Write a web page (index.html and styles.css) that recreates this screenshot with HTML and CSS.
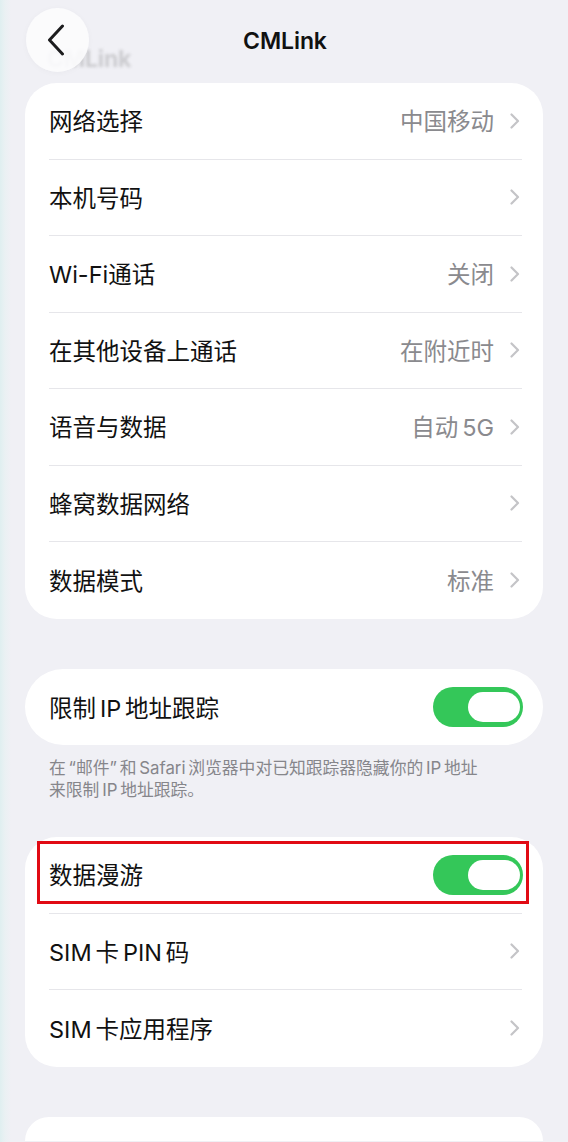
FILE: index.html
```html
<!DOCTYPE html>
<html lang="zh-CN">
<head>
<meta charset="utf-8">
<title>CMLink</title>
<link rel="stylesheet" href="styles.css">
</head>
<body>
<div class="page">
  <header class="nav">
    <span class="ghost-title">CMLink</span>
    <button class="back" aria-label="返回">
      <svg width="18" height="32" viewBox="0 0 18 32"><path d="M15.5 2 L2.5 16 L15.5 30" fill="none" stroke="#1c1c1e" stroke-width="3" stroke-linecap="round" stroke-linejoin="round"/></svg>
    </button>
    <h1 class="title">CMLink</h1>
    <span class="nav-spacer"></span>
  </header>

  <section class="card">
    <div class="row"><span class="label">网络选择</span><span class="value">中国移动</span><svg class="chev" width="10" height="16" viewBox="0 0 10 16"><path d="M1.5 1.5 L8 8 L1.5 14.5"/></svg></div>
    <div class="row"><span class="label">本机号码</span><span class="value"></span><svg class="chev" width="10" height="16" viewBox="0 0 10 16"><path d="M1.5 1.5 L8 8 L1.5 14.5"/></svg></div>
    <div class="row"><span class="label">Wi-Fi通话</span><span class="value">关闭</span><svg class="chev" width="10" height="16" viewBox="0 0 10 16"><path d="M1.5 1.5 L8 8 L1.5 14.5"/></svg></div>
    <div class="row"><span class="label">在其他设备上通话</span><span class="value">在附近时</span><svg class="chev" width="10" height="16" viewBox="0 0 10 16"><path d="M1.5 1.5 L8 8 L1.5 14.5"/></svg></div>
    <div class="row"><span class="label">语音与数据</span><span class="value">自动&#8198;5G</span><svg class="chev" width="10" height="16" viewBox="0 0 10 16"><path d="M1.5 1.5 L8 8 L1.5 14.5"/></svg></div>
    <div class="row"><span class="label">蜂窝数据网络</span><span class="value"></span><svg class="chev" width="10" height="16" viewBox="0 0 10 16"><path d="M1.5 1.5 L8 8 L1.5 14.5"/></svg></div>
    <div class="row"><span class="label">数据模式</span><span class="value">标准</span><svg class="chev" width="10" height="16" viewBox="0 0 10 16"><path d="M1.5 1.5 L8 8 L1.5 14.5"/></svg></div>
  </section>

  <section class="card pill">
    <div class="row"><span class="label">限制&#8198;IP&#8198;地址跟踪</span><span class="toggle"><span class="knob"></span></span></div>
  </section>
  <p class="footnote">在&#8198;“邮件”&#8198;和&#8198;Safari&#8198;浏览器中对已知跟踪器隐藏你的&#8198;IP&#8198;地址<br>来限制&#8198;IP&#8198;地址跟踪。</p>

  <section class="card card-roam">
    <div class="highlight"></div>
    <div class="row"><span class="label">数据漫游</span><span class="toggle"><span class="knob"></span></span></div>
    <div class="row"><span class="label">SIM&#8198;卡&#8198;PIN&#8198;码</span><span class="value"></span><svg class="chev" width="10" height="16" viewBox="0 0 10 16"><path d="M1.5 1.5 L8 8 L1.5 14.5"/></svg></div>
    <div class="row"><span class="label">SIM&#8198;卡应用程序</span><span class="value"></span><svg class="chev" width="10" height="16" viewBox="0 0 10 16"><path d="M1.5 1.5 L8 8 L1.5 14.5"/></svg></div>
  </section>

  <section class="card card-tail"></section>
</div>
</body>
</html>
```

FILE: styles.css
```css
* { box-sizing: border-box; }

html, body {
  margin: 0;
  padding: 0;
}

body {
  width: 568px;
  height: 1142px;
  overflow: hidden;
  background: linear-gradient(to right, #dfeff0 0, #eaf1f3 5px, #f0f0f5 11px, #f0f0f5 100%);
  font-family: "Inter", "Noto Sans CJK SC", sans-serif;
  color: #111;
}

.page {
  padding: 0 25px;
}

.nav {
  position: relative;
  height: 83px;
  display: grid;
  grid-template-columns: 63px 1fr 63px;
  align-items: start;
  padding-top: 8px;
}

.ghost-title {
  position: absolute;
  left: 22px;
  top: 45px;
  font-size: 23px;
  font-weight: 700;
  color: #cbcbcf;
  filter: blur(1.4px);
  letter-spacing: -0.2px;
}

.back {
  position: relative;
  width: 63px;
  height: 64px;
  margin-left: 1px;
  border: none;
  border-radius: 50%;
  background: rgba(252, 252, 253, 0.9);
  box-shadow: 0 1px 6px rgba(0, 0, 0, 0.03);
  display: flex;
  align-items: center;
  justify-content: center;
  padding: 0 3px 0 0;
}

.title {
  margin: 0;
  text-align: center;
  font-size: 23px;
  font-weight: 600;
  line-height: 28px;
  padding-top: 19px;
  color: #111;
  letter-spacing: -0.1px;
  transform: translateX(1px);
}

.card {
  position: relative;
  background: #fff;
  border-radius: 32px;
  padding: 0 21px 0 24px;
  margin-bottom: 50.5px;
}

.row {
  display: flex;
  align-items: center;
  height: 76.5px;
  border-bottom: 1px solid #e6e6ea;
}

.row:last-child {
  border-bottom: none;
}

.label {
  flex: 1;
  font-size: 23.5px;
  color: #111;
  white-space: nowrap;
  padding-bottom: 1px;
}

.value {
  font-size: 23.5px;
  color: #8a8a8e;
  margin-right: 16px;
  padding-bottom: 1px;
}

.chev {
  flex: none;
  margin-right: 2px;
}

.chev path {
  fill: none;
  stroke: #c4c4c7;
  stroke-width: 2.2;
  stroke-linecap: round;
  stroke-linejoin: round;
}

.pill {
  border-radius: 38px;
  margin-bottom: 0;
}

.pill .row {
  height: 76px;
}

.toggle {
  flex: none;
  width: 90px;
  height: 40px;
  border-radius: 20px;
  background: #34c759;
  display: flex;
  align-items: center;
  justify-content: flex-end;
  padding-right: 3px;
  margin-right: -1px;
}

.knob {
  width: 52px;
  height: 30px;
  border-radius: 15px;
  background: #fff;
}

.footnote {
  margin: 12px 0 36px;
  padding: 0 24px;
  font-size: 16.8px;
  line-height: 22px;
  color: #86868b;
  white-space: nowrap;
}

.highlight {
  position: absolute;
  left: 12px;
  top: 4px;
  width: 492px;
  height: 63px;
  border: 3px solid #e10a14;
  pointer-events: none;
}

.card-tail {
  height: 24px;
  margin-bottom: 0;
  border-radius: 32px 32px 0 0;
}
```
